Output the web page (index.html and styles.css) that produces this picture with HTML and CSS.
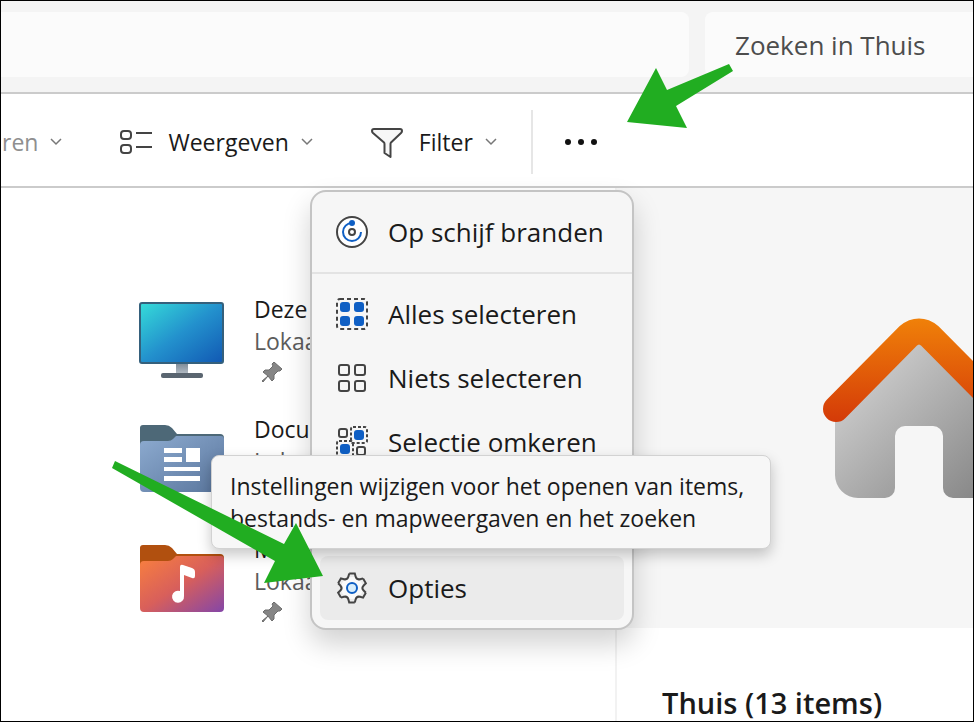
FILE: index.html
```html
<!DOCTYPE html>
<html lang="nl">
<head>
    <meta charset="UTF-8">
    <meta name="viewport" content="width=device-width, initial-scale=1.0">
    <title>Thuis - Verkenner</title>
    <link rel="stylesheet" href="styles.css">
</head>
<body>
    <div class="window">
        <header class="address-row">
            <div class="address-bar"></div>
            <input class="search" type="text" placeholder="Zoeken in Thuis" aria-label="Zoeken in Thuis">
        </header>

        <nav class="toolbar">
            <button class="tool disabled" disabled>
                <span>ren</span>
                <svg class="chevron" viewBox="0 0 12 8"><path d="M1 1l5 5 5-5"/></svg>
            </button>
            <button class="tool">
                <svg class="tool-icon" viewBox="0 0 32 32">
                    <rect x="1" y="5" width="10" height="8" rx="3"/>
                    <rect x="1" y="19" width="10" height="8" rx="3"/>
                    <path d="M16 7h16M16 21h16"/>
                </svg>
                <span>Weergeven</span>
                <svg class="chevron" viewBox="0 0 12 8"><path d="M1 1l5 5 5-5"/></svg>
            </button>
            <button class="tool">
                <svg class="tool-icon" viewBox="0 0 32 32">
                    <path class="funnel" d="M3 3h26q2 0 2 2 0 1-1 2L20 16.500q-.5.5-.5 1.500V31l-6-4V18q0-1-.5-1.500L2 7Q1 6 1 5 1 3 3 3z"/>
                </svg>
                <span>Filter</span>
                <svg class="chevron" viewBox="0 0 12 8"><path d="M1 1l5 5 5-5"/></svg>
            </button>
            <span class="tool-divider"></span>
            <button class="more" aria-label="Meer">
                <svg viewBox="0 0 32 8"><circle cx="3" cy="4" r="3"/><circle cx="16" cy="4" r="3"/><circle cx="29" cy="4" r="3"/></svg>
            </button>
        </nav>

        <main class="content">
            <ul class="places">
                <li class="place">
                    <svg class="place-icon" viewBox="0 0 88 88">
                        <defs>
                            <linearGradient id="screen" x1="0" y1="0" x2="1" y2="1">
                                <stop offset="0" stop-color="#35dcd9"/>
                                <stop offset=".5" stop-color="#2391cd"/>
                                <stop offset="1" stop-color="#1158b3"/>
                            </linearGradient>
                            <linearGradient id="stand" x1="0" y1="0" x2="0" y2="1">
                                <stop offset="0" stop-color="#7e8b97"/>
                                <stop offset="1" stop-color="#b4bcc5"/>
                            </linearGradient>
                        </defs>
                        <path d="M38 65h12v11H38z" fill="url(#stand)"/>
                        <rect x="23" y="75" width="42" height="5" rx="2" fill="#5a6570"/>
                        <rect x="2" y="5" width="83" height="60" rx="2" fill="url(#screen)" stroke="#35607c" stroke-width="2"/>
                    </svg>
                    <div class="place-text">
                        <span class="name">Deze pc</span>
                        <span class="kind">Lokaal</span>
                        <svg class="pin" viewBox="0 0 20 20"><path d="M12 0l8 7-2 2-2 0-4 4 0 4-2 2-4-5-5 6-1 0 0-1 6-5-5-4 2-2 4 0 4-4-1-2z"/></svg>
                    </div>
                </li>
                <li class="place">
                    <svg class="place-icon" viewBox="0 0 88 88">
                        <defs>
                            <linearGradient id="docs" x1="0" y1="0" x2="1" y2="1">
                                <stop offset="0" stop-color="#8dabd0"/>
                                <stop offset="1" stop-color="#59759c"/>
                            </linearGradient>
                        </defs>
                        <path d="M2 10q0-3 3-3h22q4 0 7 3l5 6h43q4 0 4 4v10H2z" fill="#4d6877"/>
                        <path d="M2 27q0-4 4-4h24q3 0 5-2l3-3h45q3 0 3 3v49q0 4-4 4H6q-4 0-4-4z" fill="url(#docs)"/>
                        <path d="M26 30h18v5H26zM26 39h18v5H26zM48 30h14v14H48zM26 49h36v4H26zM26 58h36v5H26z" fill="#fff"/>
                    </svg>
                    <div class="place-text">
                        <span class="name">Documenten</span>
                        <span class="kind">Lokaal</span>
                    </div>
                </li>
                <li class="place">
                    <svg class="place-icon" viewBox="0 0 88 88">
                        <defs>
                            <linearGradient id="music" x1="0" y1="0" x2="1" y2="1">
                                <stop offset="0" stop-color="#f9803e"/>
                                <stop offset=".5" stop-color="#d85f5b"/>
                                <stop offset="1" stop-color="#8446a8"/>
                            </linearGradient>
                        </defs>
                        <path d="M2 10q0-3 3-3h22q4 0 7 3l5 6h43q4 0 4 4v10H2z" fill="#b1500f"/>
                        <path d="M2 27q0-4 4-4h24q3 0 5-2l3-3h45q3 0 3 3v49q0 4-4 4H6q-4 0-4-4z" fill="url(#music)"/>
                        <path d="M42 29q0-3 3-2l9 3q3 1 3 4v4q0 3-3 2l-8-3v21a6 6 0 1 1-4-5z" fill="#fff"/>
                    </svg>
                    <div class="place-text">
                        <span class="name">Muziek</span>
                        <span class="kind">Lokaal</span>
                        <svg class="pin" viewBox="0 0 20 20"><path d="M12 0l8 7-2 2-2 0-4 4 0 4-2 2-4-5-5 6-1 0 0-1 6-5-5-4 2-2 4 0 4-4-1-2z"/></svg>
                    </div>
                </li>
            </ul>

            <aside class="details">
                <div class="preview">
                    <svg class="house" viewBox="0 0 194 182">
                        <defs>
                            <linearGradient id="wall" x1="0" y1="0" x2="1" y2="1">
                                <stop offset="0" stop-color="#dedede"/>
                                <stop offset="1" stop-color="#808080"/>
                            </linearGradient>
                            <linearGradient id="roof" gradientUnits="userSpaceOnUse" x1="97" y1="0" x2="97" y2="104">
                                <stop offset="0" stop-color="#f08109"/>
                                <stop offset="1" stop-color="#d43a08"/>
                            </linearGradient>
                        </defs>
                        <path d="M13 88l84-72 84 72v69a23 23 0 0 1-23 23h-27a10 10 0 0 1-10-10v-52a10 10 0 0 0-10-10H83a10 10 0 0 0-10 10v52a10 10 0 0 1-10 10H36a23 23 0 0 1-23-23z" fill="url(#wall)"/>
                        <path d="M14 91L86 18q11-9 22 0l72 73" fill="none" stroke="url(#roof)" stroke-width="26" stroke-linecap="round"/>
                    </svg>
                </div>
                <h1 class="details-title">Thuis (13 items)</h1>
            </aside>
        </main>

        <div class="menu" role="menu">
            <div class="menu-group">
                <button class="menu-item" role="menuitem">
                    <svg class="menu-icon" viewBox="0 0 32 32">
                        <circle cx="16" cy="16" r="15" fill="#fff"/>
                        <circle cx="16" cy="16" r="3"/>
                        <path class="blue-line" d="M16 7a9 9 0 1 0 9 9"/>
                        <circle class="blue-fill" cx="16" cy="7" r="3"/>
                    </svg>
                    <span>Op schijf branden</span>
                </button>
            </div>
            <div class="menu-group">
                <button class="menu-item" role="menuitem">
                    <svg class="menu-icon" viewBox="0 0 32 32">
                        <rect class="dashed" x="1" y="1" width="30" height="30" rx="3"/>
                        <g class="blue-fill">
                            <rect x="4" y="4" width="10" height="10" rx="3"/>
                            <rect x="18" y="4" width="10" height="10" rx="3"/>
                            <rect x="4" y="18" width="10" height="10" rx="3"/>
                            <rect x="18" y="18" width="10" height="10" rx="3"/>
                        </g>
                    </svg>
                    <span>Alles selecteren</span>
                </button>
                <button class="menu-item" role="menuitem">
                    <svg class="menu-icon" viewBox="0 0 32 32">
                        <rect x="3" y="3" width="10" height="10" rx="2"/>
                        <rect x="19" y="3" width="10" height="10" rx="2"/>
                        <rect x="3" y="19" width="10" height="10" rx="2"/>
                        <rect x="19" y="19" width="10" height="10" rx="2"/>
                    </svg>
                    <span>Niets selecteren</span>
                </button>
                <button class="menu-item" role="menuitem">
                    <svg class="menu-icon" viewBox="0 0 32 32">
                        <rect x="3" y="3" width="8" height="8" rx="2"/>
                        <rect x="21" y="21" width="8" height="8" rx="2"/>
                        <rect class="dashed-small" x="15" y="1" width="16" height="16" rx="2"/>
                        <rect class="dashed-small" x="1" y="15" width="16" height="16" rx="2"/>
                        <rect class="blue-fill" x="18" y="4" width="10" height="10" rx="3"/>
                        <rect class="blue-fill" x="4" y="18" width="10" height="10" rx="3"/>
                    </svg>
                    <span>Selectie omkeren</span>
                </button>
            </div>
            <div class="menu-group options-group">
                <button class="menu-item active" role="menuitem" aria-describedby="options-tip">
                    <svg class="menu-icon" viewBox="0 0 32 32">
                        <defs><path id="tooth" d="M13.200 1.600H18.800L19.600 4.600Q20.540 8.120 24.070 7.180L27.070 6.380"/></defs>
                        <circle cx="16" cy="16" r="11" fill="#fafafa" stroke="none"/>
                        <use href="#tooth"/>
                        <use href="#tooth" transform="rotate(60 16 16)"/>
                        <use href="#tooth" transform="rotate(120 16 16)"/>
                        <use href="#tooth" transform="rotate(180 16 16)"/>
                        <use href="#tooth" transform="rotate(240 16 16)"/>
                        <use href="#tooth" transform="rotate(300 16 16)"/>
                        <circle class="hub" cx="16" cy="16" r="5"/>
                    </svg>
                    <span>Opties</span>
                </button>
            </div>
        </div>

        <div class="tooltip" id="options-tip" role="tooltip">Instellingen wijzigen voor het openen van items,<br>bestands- en mapweergaven en het zoeken</div>

        <svg class="arrow arrow-more" viewBox="0 0 108 66"><path d="M0 58L29 4l11 22L102 0l4 7-57 35 11 22z"/></svg>
        <svg class="arrow arrow-options" viewBox="0 0 212 124"><path d="M3 0l169 83 12-21 27 53-59 7 11-22L0 7z"/></svg>
    </div>
</body>
</html>
```
FILE: styles.css
```css
* {
    box-sizing: border-box;
}
body {
    margin: 0;
    font-family: "Open Sans", "Noto Sans", sans-serif;
    color: #1a1a1a;
    background: #fff;
}
button {
    font: inherit;
    color: inherit;
    background: none;
    border: none;
    padding: 0;
}
.window {
    position: relative;
    display: flex;
    flex-direction: column;
    height: 100vh;
    border: 1px solid #000;
    overflow: hidden;
}

/* address bar and search */
.address-row {
    display: flex;
    gap: 16px;
    padding: 11px 0 15px;
    background: #f4f4f4;
    border-bottom: 2px solid #cbcbcb;
}
.address-bar {
    flex: 1;
    background: #fbfbfb;
    border-radius: 0 8px 8px 0;
}
.search {
    width: 268px;
    height: 65px;
    padding: 0 0 0 30px;
    border: none;
    border-radius: 8px 0 0 8px;
    background: #fbfbfb;
    font: inherit;
    font-size: 26px;
}
.search::placeholder {
    color: #4d4d4d;
    opacity: 1;
}

/* toolbar */
.toolbar {
    display: flex;
    align-items: center;
    gap: 58px;
    height: 94px;
    padding: 4px 0 0 1px;
    border-bottom: 2px solid #cbcbcb;
    font-size: 23px;
    flex-shrink: 0;
}
.tool {
    display: flex;
    align-items: center;
    line-height: 32px;
}
.tool.disabled {
    color: #8f8f8f;
}
.tool-icon {
    width: 32px;
    height: 32px;
    margin-right: 16px;
    fill: none;
    stroke: #444;
    stroke-width: 2;
}
.tool-icon .funnel {
    fill: #f7f7f7;
    stroke-linejoin: round;
}
.chevron {
    width: 12px;
    height: 8px;
    margin-left: 12px;
    fill: none;
    stroke: #777;
    stroke-width: 1.5;
}
.tool-divider {
    width: 2px;
    height: 64px;
    margin: 0 -26px 0 -24px;
    background: #e6e6e6;
}
.more svg {
    display: block;
    width: 32px;
    height: 8px;
    fill: #111;
}

/* content */
.content {
    flex: 1;
    display: flex;
    min-height: 0;
}
.places {
    flex: 1;
    display: flex;
    flex-direction: column;
    gap: 24px;
    margin: 0;
    padding: 105px 0 0 137px;
    list-style: none;
}
.place {
    display: flex;
    gap: 28px;
    height: 96px;
}
.place-icon {
    width: 88px;
    height: 88px;
    margin-top: 5px;
}
.place-text {
    display: flex;
    flex-direction: column;
    font-size: 23px;
    line-height: 32px;
}
.kind {
    color: #5c5c5c;
}
.pin {
    width: 20px;
    height: 20px;
    margin: 5px 0 0 8px;
    fill: #858585;
    stroke: #6c6c6c;
}
.details {
    width: 358px;
    border-left: 2px solid #f2f2f2;
    overflow: hidden;
}
.preview {
    height: 440px;
    padding: 130px 0 0 205px;
    background: #f6f6f6;
}
.house {
    display: block;
    width: 194px;
    height: 182px;
}
.details-title {
    margin: 0;
    padding: 56px 0 0 45px;
    font-size: 29px;
    line-height: 38px;
    font-weight: 600;
}

/* overflow menu */
.menu {
    position: absolute;
    top: 189px;
    left: 309px;
    width: 324px;
    border: 2px solid #c4c4c4;
    border-radius: 16px;
    background: #f6f6f6;
    box-shadow: 0 14px 28px rgba(0, 0, 0, 0.18);
    font-size: 26px;
}
.menu-group {
    padding: 8px;
}
.menu-group + .menu-group {
    border-top: 2px solid #e3e3e3;
}
.menu-item {
    display: flex;
    align-items: center;
    gap: 20px;
    width: 100%;
    height: 64px;
    padding-left: 16px;
    border-radius: 8px;
}
.menu-item.active {
    background: #ebebeb;
}
.options-group {
    padding-top: 72px;
}
.menu-icon {
    width: 32px;
    height: 32px;
    fill: none;
    stroke: #444;
    stroke-width: 2;
}
.menu-icon .dashed {
    stroke-dasharray: 4 3;
}
.menu-icon .dashed-small {
    stroke-dasharray: 3 2;
}
.menu-icon .blue-fill {
    fill: #0f5fc4;
    stroke: none;
}
.menu-icon .blue-line {
    stroke: #0f5fc4;
}
.menu-icon .hub {
    fill: #d8eefc;
    stroke: #0f5fc4;
}

.tooltip {
    position: absolute;
    top: 454px;
    left: 210px;
    padding: 14px 26px 14px 18px;
    border: 1px solid #d2d2d2;
    border-radius: 8px;
    background: #f7f7f7;
    box-shadow: 0 6px 14px rgba(0, 0, 0, 0.22);
    font-size: 23px;
    line-height: 32px;
    white-space: nowrap;
}

/* pointer arrows */
.arrow {
    position: absolute;
    fill: #21ad21;
    pointer-events: none;
}
.arrow-more {
    top: 63px;
    left: 626px;
    width: 108px;
    height: 66px;
}
.arrow-options {
    top: 460px;
    left: 111px;
    width: 212px;
    height: 124px;
}
```
